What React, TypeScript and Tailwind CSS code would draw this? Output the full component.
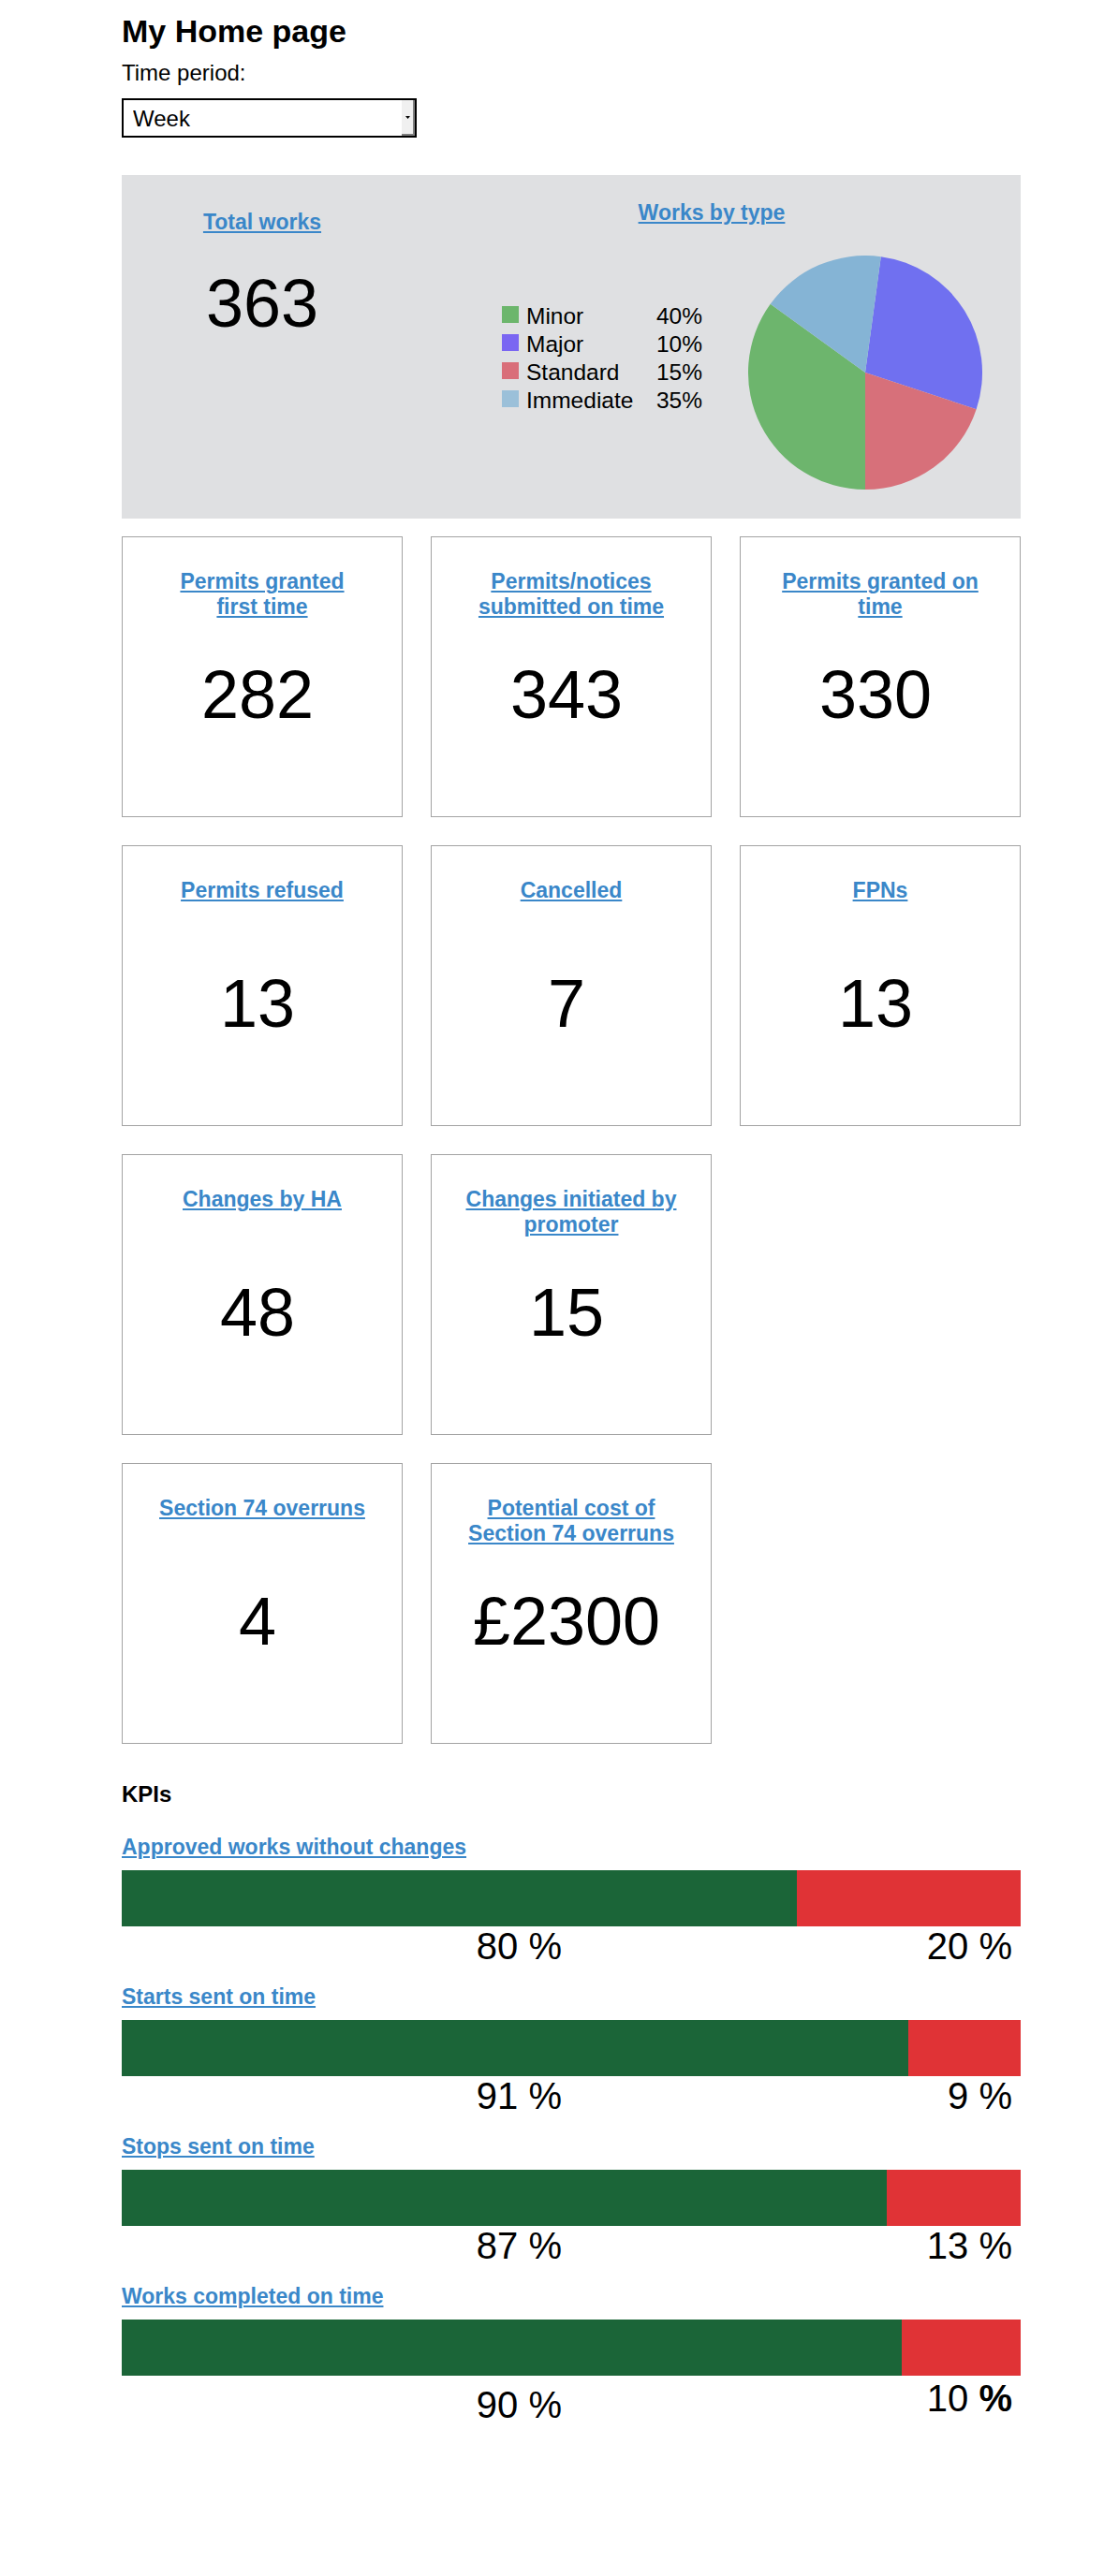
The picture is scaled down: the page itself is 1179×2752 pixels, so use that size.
import React from "react";

const pieSlices = [
  { name: "Major", from: 7.7, to: 108.3, color: "#7070f0" },
  { name: "Standard", from: 108.3, to: 180, color: "#d7707a" },
  { name: "Minor", from: 180, to: 305.9, color: "#6db56d" },
  { name: "Immediate", from: 305.9, to: 367.7, color: "#85b4d5" },
];

const legend = [
  { label: "Minor", value: "40%", color: "bg-[#6cb66c]" },
  { label: "Major", value: "10%", color: "bg-[#7a66f2]" },
  { label: "Standard", value: "15%", color: "bg-[#d96e79]" },
  { label: "Immediate", value: "35%", color: "bg-[#9bc0d9]" },
];

const cardRows = [
  [
    { title: "Permits granted\nfirst time", value: "282" },
    { title: "Permits/notices\nsubmitted on time", value: "343" },
    { title: "Permits granted on\ntime", value: "330" },
  ],
  [
    { title: "Permits refused", value: "13" },
    { title: "Cancelled", value: "7" },
    { title: "FPNs", value: "13" },
  ],
  [
    { title: "Changes by HA", value: "48" },
    { title: "Changes initiated by\npromoter", value: "15" },
  ],
  [
    { title: "Section 74 overruns", value: "4" },
    { title: "Potential cost of\nSection 74 overruns", value: "£2300" },
  ],
];

const kpis = [
  { title: "Approved works without changes", good: 80, bad: 20, width: 75.1, last: false },
  { title: "Starts sent on time", good: 91, bad: 9, width: 87.5, last: false },
  { title: "Stops sent on time", good: 87, bad: 13, width: 85.1, last: false },
  { title: "Works completed on time", good: 90, bad: 10, width: 86.8, last: true },
];

const link = "text-[#3a87c9] font-bold underline text-[23px] decoration-2 underline-offset-2";

function point(deg: number) {
  const r = (deg * Math.PI) / 180;
  return `${125 + 125 * Math.sin(r)},${125 - 125 * Math.cos(r)}`;
}

const Pie = () => (
  <svg width="250" height="250" viewBox="0 0 250 250" className="shrink-0">
    {pieSlices.map((s) => (
      <path
        key={s.name}
        d={`M125,125 L${point(s.from)} A125,125 0 ${s.to - s.from > 180 ? 1 : 0} 1 ${point(s.to)} Z`}
        fill={s.color}
      />
    ))}
  </svg>
);

const StatCard = ({ title, value }: { title: string; value: string }) => (
  <div className="h-[300px] border border-[#a3a3a3] bg-white flex flex-col items-center text-center">
    <div className="h-[132px] w-full pt-[34px] px-[20px] text-[23px] whitespace-pre-line">
      <a href="#" className={link}>
        {title}
      </a>
    </div>
    <div className="text-[72px] leading-none pr-[10px]">{value}</div>
  </div>
);

export default function App() {
  return (
    <div className="min-h-[2752px] bg-white text-black leading-[normal] font-['Liberation_Sans',Arial,sans-serif] pl-[130px] pt-[14px]">
      <div className="w-[960px]">
        <h1 className="text-[34px] font-bold">My Home page</h1>
        <div className="mt-[11px] text-[24px]">Time period:</div>
        <div className="relative mt-[13px] w-[315px] h-[42px]">
          <select className="appearance-none w-full h-full border-2 border-black bg-white pl-[10px] text-[24px] outline-none">
            <option>Week</option>
            <option>Month</option>
            <option>Year</option>
          </select>
          <div className="pointer-events-none absolute right-[2px] top-[2px] bottom-[2px] w-[14px] bg-[#f0f0f0] border-r-2 border-b-2 border-[#808080] flex items-center justify-center">
            <svg width="5" height="3" viewBox="0 0 5 3">
              <path d="M0,0 L5,0 L2.5,3 Z" fill="#000" />
            </svg>
          </div>
        </div>

        <div className="mt-[40px] h-[367px] bg-[#dfe0e2] flex">
          <div className="w-[300px] pt-[37px] flex flex-col items-center text-[23px]">
            <a href="#" className={link}>
              Total works
            </a>
            <div className="mt-[37px] text-[72px] leading-none">363</div>
          </div>
          <div className="flex-1 pt-[27px]">
            <div className="text-center text-[23px]">
              <a href="#" className={link}>
                Works by type
              </a>
            </div>
            <div className="mt-[32px] flex items-start">
              <div className="ml-[106px] mt-[50px] text-[24.5px] leading-[30px]">
                {legend.map((l) => (
                  <div key={l.label} className="flex">
                    <span className={`w-[18px] h-[18px] mt-[4px] mr-[8px] ${l.color}`} />
                    <span className="w-[138px]">{l.label}</span>
                    <span className="w-[50px] text-right">{l.value}</span>
                  </div>
                ))}
              </div>
              <div className="ml-[49px]">
                <Pie />
              </div>
            </div>
          </div>
        </div>

        <div className="mt-[19px] flex flex-col gap-[30px]">
          {cardRows.map((row, i) => (
            <div key={i} className="grid grid-cols-[300px_300px_300px] gap-[30px]">
              {row.map((c) => (
                <StatCard key={c.title} title={c.title} value={c.value} />
              ))}
            </div>
          ))}
        </div>

        <h3 className="mt-[40px] text-[24px] font-bold">KPIs</h3>
        <div className="mt-[29px] flex flex-col gap-[20px]">
          {kpis.map((k) => (
            <div key={k.title}>
              <div className="text-[23px]">
                <a href="#" className={link}>
                  {k.title}
                </a>
              </div>
              <div className="mt-[11px] h-[60px] flex">
                <div className="h-full bg-[#1b6538]" style={{ width: `${k.width}%` }} />
                <div className="h-full flex-1 bg-[#e03336]" />
              </div>
              <div className="grid grid-cols-2 text-[40px] leading-[42px]">
                <div className={`text-right pr-[10px] ${k.last ? "mt-[10px]" : ""}`}>{k.good} %</div>
                <div className={`text-right pr-[9px] ${k.last ? "mt-[3px]" : ""}`}>
                  {k.bad} {k.last ? <b>%</b> : "%"}
                </div>
              </div>
            </div>
          ))}
        </div>
      </div>
    </div>
  );
}
